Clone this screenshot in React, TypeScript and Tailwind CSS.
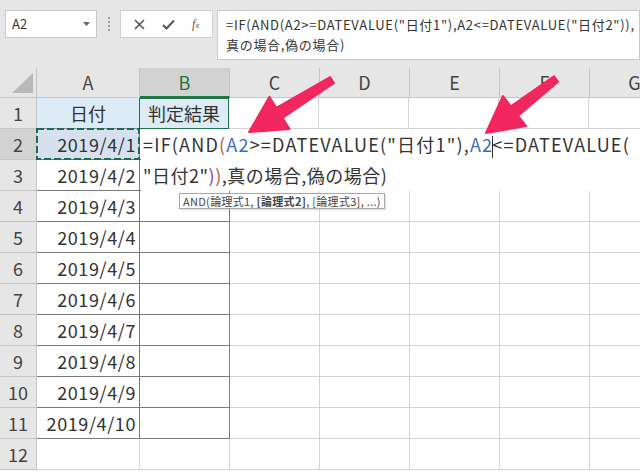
import React from "react";

const COLS = [
  { key: "A", w: "w-[103px]" },
  { key: "B", w: "w-[90px]" },
  { key: "C", w: "w-[90px]" },
  { key: "D", w: "w-[90px]" },
  { key: "E", w: "w-[90px]" },
  { key: "F", w: "w-[90px]" },
  { key: "G", w: "w-[90px]" },
];

const dates = [
  "2019/4/1",
  "2019/4/2",
  "2019/4/3",
  "2019/4/4",
  "2019/4/5",
  "2019/4/6",
  "2019/4/7",
  "2019/4/8",
  "2019/4/9",
  "2019/4/10",
];

// 矢印のポリゴンを計算
function arrowPoints(
  tail: [number, number],
  tip: [number, number],
  headLen: number,
  headHalf: number,
  tailHalf: number,
  neckHalf: number
) {
  const dx = tip[0] - tail[0];
  const dy = tip[1] - tail[1];
  const len = Math.hypot(dx, dy);
  const ux = dx / len;
  const uy = dy / len;
  const nx = -uy;
  const ny = ux;
  const bx = tip[0] - ux * headLen;
  const by = tip[1] - uy * headLen;
  const pts = [
    [tail[0] + nx * tailHalf, tail[1] + ny * tailHalf],
    [bx + nx * neckHalf, by + ny * neckHalf],
    [bx + nx * headHalf, by + ny * headHalf],
    tip,
    [bx - nx * headHalf, by - ny * headHalf],
    [bx - nx * neckHalf, by - ny * neckHalf],
    [tail[0] - nx * tailHalf, tail[1] - ny * tailHalf],
  ];
  return pts.map((p) => `${p[0].toFixed(1)},${p[1].toFixed(1)}`).join(" ");
}

const Toolbar = () => (
  <div className="h-[68px] bg-[#e6e6e6] flex items-start pt-[10px] pl-[5px] gap-0 text-[13px] text-[#333]">
    <div className="w-[92px] h-[28px] bg-white border border-[#c8c8c8] flex items-center justify-between pl-[6px] pr-[6px]">
      <span>A2</span>
      <svg width="7" height="4" viewBox="0 0 7 4">
        <path d="M0 0 L7 0 L3.5 4 Z" fill="#666" />
      </svg>
    </div>
    <div className="w-[23px] h-[28px] flex flex-col items-center justify-center gap-[2px]">
      <span className="w-[2px] h-[2px] bg-[#a0a0a0]" />
      <span className="w-[2px] h-[2px] bg-[#a0a0a0]" />
      <span className="w-[2px] h-[2px] bg-[#a0a0a0]" />
      <span className="w-[2px] h-[2px] bg-[#a0a0a0]" />
    </div>
    <div className="w-[93px] h-[28px] bg-white border border-[#d0d0d0] flex items-center justify-around px-[4px]">
      <svg width="11" height="11" viewBox="0 0 11 11">
        <path d="M1 1 L10 10 M10 1 L1 10" stroke="#555" strokeWidth="1.6" />
      </svg>
      <svg width="13" height="11" viewBox="0 0 13 11">
        <path d="M1 6 L4.5 9.5 L12 1.5" stroke="#555" strokeWidth="2" fill="none" />
      </svg>
      <span className="font-['Liberation_Serif',serif] italic text-[12px] text-[#555]">
        f<span className="text-[9px]">x</span>
      </span>
    </div>
    <div className="ml-[4px] flex-1 h-[50px] bg-white border border-[#c8c8c8] pl-[8px] pt-[4px] text-[13px] leading-[20px] tracking-[0.7px] whitespace-nowrap overflow-hidden">
      <div>=IF(AND(A2&gt;=DATEVALUE("日付1"),A2&lt;=DATEVALUE("日付2")),</div>
      <div>真の場合,偽の場合)</div>
    </div>
  </div>
);

const ColHeader = () => (
  <div className="flex h-[30px]">
    <div className="w-[37px] shrink-0 bg-[#e6e6e6] border-r border-b border-[#c6c6c6] relative">
      <svg className="absolute left-0 top-0" width="37" height="30" viewBox="0 0 37 30">
        <path d="M12 25 L33 25 L33 5 Z" fill="#b9b9b9" />
      </svg>
    </div>
    {COLS.map((c) => (
      <div
        key={c.key}
        className={
          c.key === "B"
            ? `${c.w} shrink-0 bg-[#d2d2d2] border-r border-[#c6c6c6] border-b-2 border-b-[#217346] text-[#217346] flex items-center justify-center`
            : `${c.w} shrink-0 bg-[#e6e6e6] border-r border-b border-[#c6c6c6] text-[#444] flex items-center justify-center`
        }
      >
        {c.key}
      </div>
    ))}
  </div>
);

const RowHeader = ({ n }: { n: number }) => (
  <div
    className={
      n === 2
        ? "w-[37px] shrink-0 bg-[#d2d2d2] border-r border-b border-[#c6c6c6] text-[#444] flex items-center justify-center"
        : "w-[37px] shrink-0 bg-[#e6e6e6] border-r border-b border-[#c6c6c6] text-[#444] flex items-center justify-center"
    }
  >
    {n}
  </div>
);

const EmptyCells = () => (
  <>
    {COLS.slice(2).map((c) => (
      <div key={c.key} className={`${c.w} shrink-0 border-r border-b border-[#d4d4d4]`} />
    ))}
  </>
);

const Sheet = () => (
  <div className="text-[18px] text-[#333]">
    <ColHeader />
    {/* 1行目 見出し */}
    <div className="flex h-[31px]">
      <RowHeader n={1} />
      <div className="w-[103px] shrink-0 bg-[#ddebf7] border-r border-b border-[#d4d4d4] border-b-[#8a8a8a] flex items-center justify-center">
        日付
      </div>
      <div className="w-[90px] shrink-0 bg-[#ddebf7] border border-[#217346] flex items-center justify-center -ml-px">
        判定結果
      </div>
      <EmptyCells />
    </div>
    {/* データ行 */}
    {dates.map((d, i) => {
      const row = i + 2;
      return (
        <div key={d} className="flex h-[31px]">
          <RowHeader n={row} />
          <div
            className={
              row === 2
                ? "w-[103px] shrink-0 bg-[#d6e1f0] border-r border-b border-[#5a7cb0] relative flex items-center justify-end pr-[3px] tracking-[0.6px]"
                : "w-[103px] shrink-0 border-r border-b border-[#7a7a7a] flex items-center justify-end pr-[3px] tracking-[0.6px]"
            }
          >
            {row === 2 && (
              <svg className="absolute -left-px -top-px" width="104" height="32" viewBox="0 0 104 32">
                <rect x="1" y="1" width="102" height="30" fill="none" stroke="#1e6a55" strokeWidth="2" strokeDasharray="7 3" />
              </svg>
            )}
            <span className="relative">{d}</span>
          </div>
          <div className="w-[90px] shrink-0 border-r border-b border-[#7a7a7a]" />
          <EmptyCells />
        </div>
      );
    })}
    {/* 12行目 */}
    <div className="flex h-[31px]">
      <RowHeader n={12} />
      <div className="w-[103px] shrink-0 border-r border-b border-[#d4d4d4]" />
      <div className="w-[90px] shrink-0 border-r border-b border-[#d4d4d4]" />
      <EmptyCells />
    </div>
  </div>
);

export default function App() {
  return (
    <div className="relative w-[640px] h-[472px] overflow-hidden bg-white font-['Noto_Sans_CJK_JP',sans-serif]">
      <Toolbar />
      <Sheet />

      {/* セル編集中の数式 */}
      <div className="absolute left-[141px] top-[129px] w-[499px] h-[62px] bg-white text-[18px] leading-[31px] text-[#333] pl-[2px] whitespace-nowrap">
        <div className="tracking-[1.2px]">
          =IF(AND<span className="text-[#b0574a]">(</span>
          <span className="text-[#3a6bc4]">A2</span>&gt;=DATEVALUE("日付1"),
          <span className="text-[#3a6bc4]">A2</span>
          <span className="inline-block w-px h-[22px] bg-[#333] align-middle -mx-px" />
          &lt;=DATEVALUE(
        </div>
        <div className="tracking-[0.5px]">
          "日付2"<span className="text-[#8a3d8f]">)</span>
          <span className="text-[#b0574a]">)</span>,真の場合,偽の場合)
        </div>
      </div>

      {/* 引数のヒント */}
      <div className="absolute left-[179px] top-[193px] h-[16px] px-[3px] bg-white border border-[#a8a8a8] shadow-[1px_1px_2px_rgba(0,0,0,0.15)] text-[11px] leading-[14px] tracking-[0.3px] text-[#444] whitespace-nowrap">
        AND(論理式1, <span className="font-bold">[論理式2]</span>, [論理式3], ...)
      </div>

      {/* 矢印 */}
      <svg className="absolute left-0 top-0 pointer-events-none" width="640" height="472" viewBox="0 0 640 472">
        <polygon
          points={arrowPoints([332, 80], [249, 132], 36, 19, 3.5, 6)}
          fill="#f2275e"
          stroke="#f2275e"
          strokeWidth="2"
          strokeLinejoin="round"
        />
        <polygon
          points={arrowPoints([556, 79], [486, 133], 36, 19, 3.5, 6)}
          fill="#f2275e"
          stroke="#f2275e"
          strokeWidth="2"
          strokeLinejoin="round"
        />
      </svg>
    </div>
  );
}
